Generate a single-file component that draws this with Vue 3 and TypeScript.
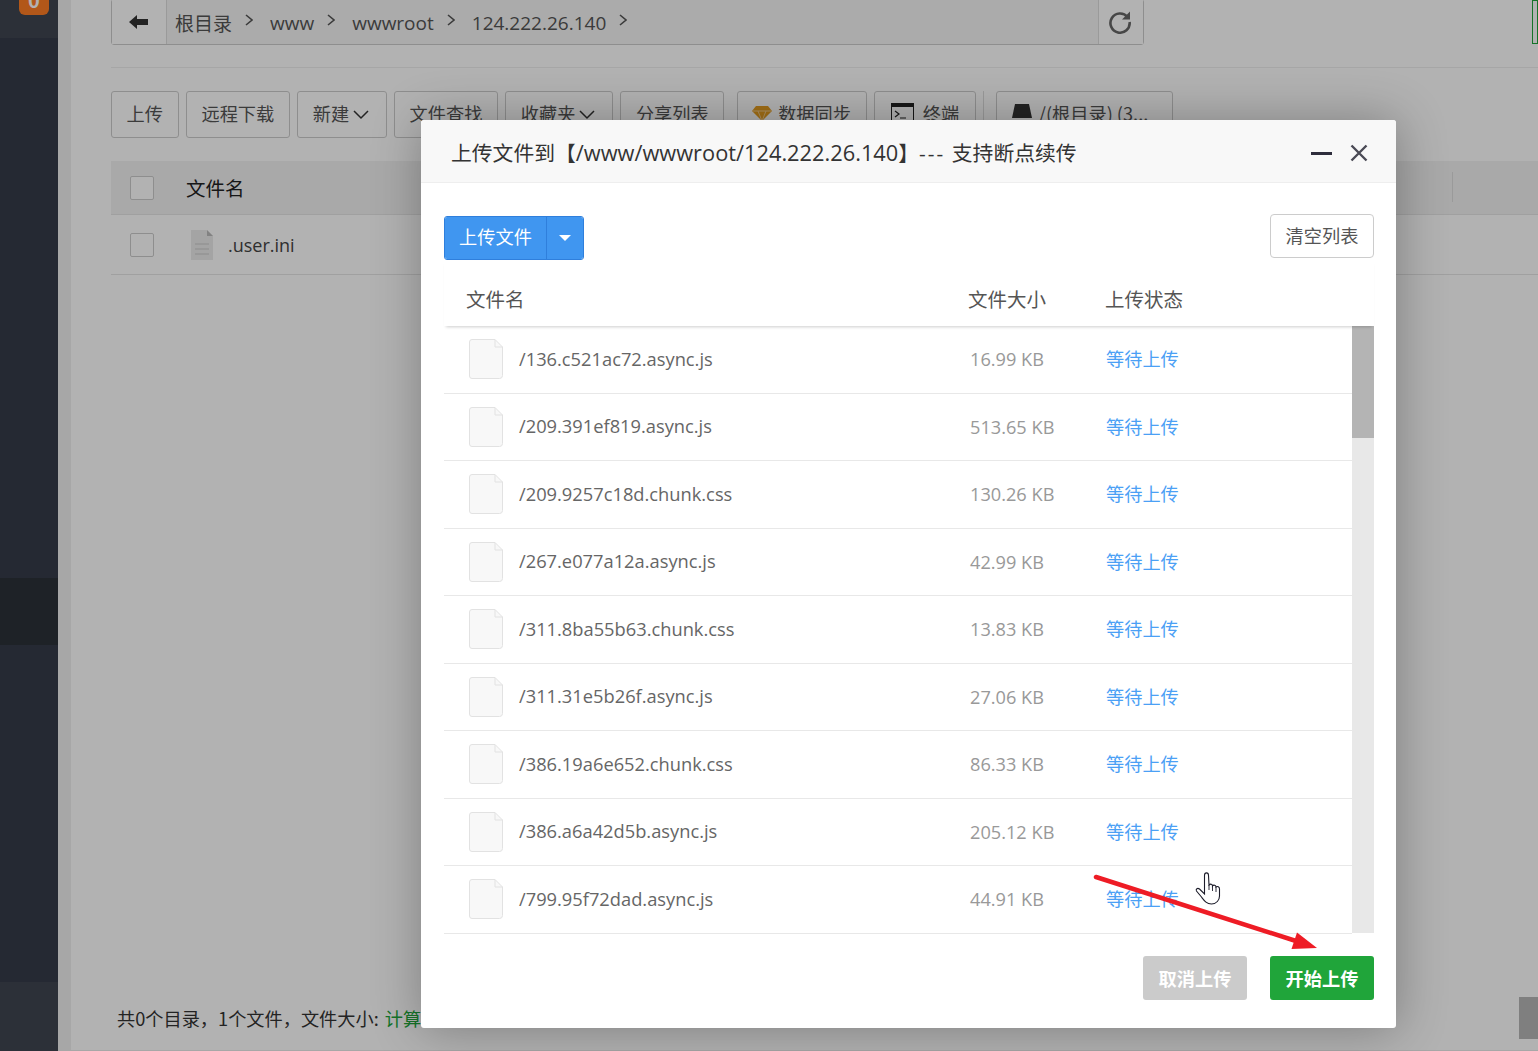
<script setup lang="ts">
interface UploadFile {
  name: string
  size: string
}

const crumbs = ['根目录', 'www', 'wwwroot', '124.222.26.140']

const files: UploadFile[] = [
  { name: '/136.c521ac72.async.js', size: '16.99 KB' },
  { name: '/209.391ef819.async.js', size: '513.65 KB' },
  { name: '/209.9257c18d.chunk.css', size: '130.26 KB' },
  { name: '/267.e077a12a.async.js', size: '42.99 KB' },
  { name: '/311.8ba55b63.chunk.css', size: '13.83 KB' },
  { name: '/311.31e5b26f.async.js', size: '27.06 KB' },
  { name: '/386.19a6e652.chunk.css', size: '86.33 KB' },
  { name: '/386.a6a42d5b.async.js', size: '205.12 KB' },
  { name: '/799.95f72dad.async.js', size: '44.91 KB' }
]
</script>

<template>
  <div class="page">
    <aside class="sidebar">
      <div class="side-top"><span class="side-badge">0</span></div>
      <div class="side-active"></div>
      <div class="side-bottom"></div>
    </aside>

    <main class="content">
      <div class="panel">
        <div class="crumb-bar">
          <button class="crumb-back">
            <svg width="20" height="16" viewBox="0 0 20 16"><path d="M0 8 8 1v4h11v6H8v4z" fill="#333" /></svg>
          </button>
          <div class="crumb-list">
            <template v-for="c in crumbs" :key="c">
              <span class="crumb">{{ c }}</span>
              <svg class="crumb-sep" width="8" height="12" viewBox="0 0 8 12"><path d="M1 1l6 5-6 5" fill="none" stroke="#555" stroke-width="1.6" /></svg>
            </template>
          </div>
          <button class="crumb-refresh">
            <svg width="24" height="24" viewBox="0 0 24 24"><path d="M19.5 7A9.6 9.6 0 1 0 21.6 12" fill="none" stroke="#666" stroke-width="2.6" /><path d="M22 1.5v8h-8z" fill="#666" /></svg>
          </button>
        </div>
        <div class="rule"></div>

        <div class="toolbar">
          <button class="tool">上传</button>
          <button class="tool">远程下载</button>
          <button class="tool">新建<svg class="chev" width="16" height="10" viewBox="0 0 16 10"><path d="M1 1l7 7 7-7" fill="none" stroke="#333" stroke-width="1.5" /></svg></button>
          <button class="tool">文件查找</button>
          <button class="tool">收藏夹<svg class="chev" width="16" height="10" viewBox="0 0 16 10"><path d="M1 1l7 7 7-7" fill="none" stroke="#333" stroke-width="1.5" /></svg></button>
          <button class="tool">分享列表</button>
          <button class="tool tool-sync">
            <svg class="tool-icon" width="20" height="16" viewBox="0 0 20 16"><path d="M4 1h12l4 5-10 10L0 6z" fill="#e8a020" /><path d="M0 6h20M6 6l4 10 4-10" fill="none" stroke="#f8d090" stroke-width="1" /></svg>数据同步
          </button>
          <button class="tool tool-term">
            <svg class="term-icon" width="23" height="20" viewBox="0 0 23 20"><rect x=".5" y=".5" width="22" height="19" fill="none" stroke="#222" /><rect width="23" height="4" fill="#222" /><path d="M4 8l4 3-4 3M9 15h6" fill="none" stroke="#222" stroke-width="1.2" /></svg>终端
          </button>
          <span class="tool-divider"></span>
          <button class="tool tool-disk">
            <svg class="disk-icon" width="20" height="18" viewBox="0 0 20 18"><path d="M3 0h14l3 14H0z" fill="#333" /><path d="M0 16h20v2H0z" fill="#bbb" /></svg>/(根目录) (3...
          </button>
        </div>

        <div class="bg-head">
          <span class="bg-check"></span>
          <span class="bg-head-name">文件名</span>
          <span class="bg-head-line"></span>
        </div>
        <div class="bg-row">
          <span class="bg-check"></span>
          <svg class="bg-file" width="22" height="30" viewBox="0 0 22 30">
            <path d="M0 0h16l6 6v24H0z" fill="#ebebeb" /><path d="M16 0l6 6h-6z" fill="#bbb" />
            <path d="M4 14h14M4 19h14M4 24h14" stroke="#c9c9c9" stroke-width="1.2" />
          </svg>
          <span class="bg-row-name">.user.ini</span>
        </div>

        <div class="bg-foot">共0个目录，1个文件，文件大小: <span class="bg-calc">计算</span></div>
      </div>
      <span class="corner-mark"></span>
      <span class="scroll-top"></span>
    </main>

    <!-- dimmed layer and dialog -->
    <div class="shade"></div>
    <section class="dialog">
      <header class="dialog-head">
        <h2 class="dialog-title">上传文件到【<span class="title-path">/www/wwwroot/124.222.26.140</span>】<span class="title-dash">---</span> 支持断点续传</h2>
        <span class="dialog-min"></span>
        <svg class="dialog-close" width="18" height="18" viewBox="0 0 18 18"><path d="M1.5 1.5l15 15M16.5 1.5l-15 15" stroke="#4a4a55" stroke-width="2.4" /></svg>
      </header>

      <div class="dialog-body">
        <div class="actions">
          <div class="split">
            <button class="split-main">上传文件</button>
            <button class="split-caret"><span class="caret"></span></button>
          </div>
          <button class="clear">清空列表</button>
        </div>

        <div class="list-head">
          <span class="col-name">文件名</span>
          <span class="col-size">文件大小</span>
          <span class="col-state">上传状态</span>
        </div>

        <div class="list-wrap">
          <div class="list">
            <div v-for="f in files" :key="f.name" class="row">
              <svg class="file-icon" width="34" height="40" viewBox="0 0 34 40">
                <path d="M3 .5h23L33.500 8v28.500a3 3 0 0 1-3 3H3a2.500 2.500 0 0 1-2.500-2.500V3A2.500 2.500 0 0 1 3 .5z" fill="#f8f8f8" stroke="#e2e2e2" />
                <path d="M26 .5V8h7.500" fill="none" stroke="#e2e2e2" />
              </svg>
              <span class="row-name">{{ f.name }}</span>
              <span class="row-size">{{ f.size }}</span>
              <span class="row-state">等待上传</span>
            </div>
          </div>
          <div class="scroll"><div class="scroll-thumb"></div></div>
        </div>

        <div class="dialog-foot">
          <button class="foot-btn cancel">取消上传</button>
          <button class="foot-btn start">开始上传</button>
        </div>
      </div>
    </section>

    <!-- annotation drawn over the screenshot -->
    <svg class="annotation" width="1538" height="1051" viewBox="0 0 1538 1051">
      <path d="M1096 877 1296 941" fill="none" stroke="#ee1c25" stroke-width="4.500" stroke-linecap="round" />
      <path d="M1297 932.500 1317 948 1291.500 949z" fill="#ee1c25" />
      <path d="M1204.500 875.500c0-3.500 4-3.500 4 0l.5 9.500c1.500-1.500 3.500-1 3.500 1 1-1.500 3.500-1 3.500 1 1.500-1 3.500-.5 3.500 2v7c0 4-3 8-8 8-5 0-7-3-10-7l-5-6c-1-2 1-3.500 3-2l5 5z" fill="#fff" stroke="#1c1c2a" stroke-width="1.100" />
      <path d="M1209 885v5M1212.500 886v5M1216 887v5" stroke="#1c1c2a" stroke-width=".9" />
    </svg>
  </div>
</template>

<style>
body { background: #fff; }
</style>

<style scoped>
.page {
  position: relative;
  display: flex;
  width: 1538px;
  height: 1051px;
  overflow: hidden;
  background: #fff;
  font-family: "Noto Sans CJK SC", "Open Sans", sans-serif;
  color: #333;
}
button { font-family: inherit; }

.sidebar {
  width: 58px;
  flex: none;
  display: flex;
  flex-direction: column;
  background: #363c49;
}
.side-top { height: 38px; background: #3f4551; position: relative; }
.side-badge {
  position: absolute;
  top: -12px; left: 19px;
  width: 30px; height: 27px;
  border-radius: 6px;
  background: #ff7d25;
  color: #fff;
  font-size: 20px;
  font-weight: 700;
  text-align: center;
  line-height: 24px;
}
.side-active { height: 67px; margin-top: 540px; background: #2c3138; }
.side-bottom { flex: 1; margin-top: 337px; background: #3f4551; }

.content {
  flex: 1;
  position: relative;
  padding-left: 13px;
  background: #f0f0f0;
}
.panel {
  height: 100%;
  background: #fff;
  padding: 0 0 0 40px;
  position: relative;
}

.crumb-bar {
  display: flex;
  width: 1033px;
  height: 46px;
  margin-top: -1px;
  border: 1px solid #ccc;
  border-radius: 3px;
  box-sizing: border-box;
  background: #f5f5f5;
}
.crumb-back {
  width: 55px;
  flex: none;
  border: none;
  border-right: 1px solid #ddd;
  background: #fff;
  display: flex;
  align-items: center;
  justify-content: center;
  padding: 0;
}
.crumb-list { flex: 1; display: flex; align-items: center; padding: 2px 0 0 8px; }
.crumb { font-size: 19px; color: #555; font-family: "Open Sans", "Noto Sans CJK SC", sans-serif; }
.crumb-sep { margin: -6px 17px 0 13px; }
.crumb-refresh {
  width: 45px;
  flex: none;
  border: none;
  border-left: 1px solid #ddd;
  background: #fff;
  padding: 0 2px 0 0;
  display: flex;
  align-items: center;
  justify-content: center;
}
.rule { width: 1427px; height: 1px; margin-top: 22px; background: #eee; }

.toolbar { display: flex; align-items: center; gap: 7.300px; margin-top: 23px; height: 47px; }
.tool {
  display: flex;
  align-items: center;
  height: 47px;
  padding: 0 14.600px 3px;
  border: 1px solid #ccc;
  border-radius: 3px;
  background: #fff;
  color: #555;
  font-size: 18.200px;
  white-space: nowrap;
}
.chev { margin: 3px 2px 0 4px; }
.tool-sync { margin-left: 5px; }
.tool-icon { margin-right: 6px; }
.tool-term { padding: 0 16px 3px; }
.term-icon { margin-right: 9px; }
.tool-divider { width: 1px; height: 47px; margin: 0 5px 0 -1px; background: #ddd; }
.tool-disk { width: 177px; overflow: hidden; padding: 0 15px 3px; }
.disk-icon { margin-right: 7px; flex: none; }

.bg-head {
  display: flex;
  align-items: center;
  width: 1427px;
  height: 53px;
  margin-top: 23px;
  background: #f2f2f2;
  position: relative;
}
.bg-check {
  width: 22px; height: 22px;
  margin-left: 19px;
  border: 1px solid #ccc;
  border-radius: 2px;
  background: #fff;
  flex: none;
}
.bg-head-name { margin-left: 32px; font-size: 19.500px; color: #222; }
.bg-head-line { position: absolute; left: 1341px; top: 11px; width: 1px; height: 30px; background: #ddd; }
.bg-row {
  display: flex;
  align-items: center;
  width: 1427px;
  height: 61px;
  border-top: 1px solid #e6e6e6;
  border-bottom: 1px solid #e6e6e6;
  box-sizing: border-box;
}
.bg-file { margin-left: 37px; }
.bg-row-name { margin-left: 15px; font-size: 18px; color: #444; font-family: "Open Sans", sans-serif; }
.bg-foot {
  position: absolute;
  left: 46px; top: 1006px;
  font-size: 18.200px;
  color: #333;
  white-space: nowrap;
}
.bg-calc { margin-left: 2px; color: #20a53a; }
.corner-mark {
  position: absolute;
  right: 0; top: 0;
  width: 6px; height: 44px;
  border: 1px solid #20a53a;
  box-sizing: border-box;
}
.scroll-top {
  position: absolute;
  right: 0; top: 997px;
  width: 19px; height: 42px;
  background: #b7b7b7;
}

.shade { position: absolute; inset: 0; background: rgba(0, 0, 0, .3); }

.dialog {
  position: absolute;
  left: 421px; top: 120px;
  width: 975px; height: 908px;
  border-radius: 3px;
  background: #fff;
  box-shadow: 1px 1px 50px rgba(0, 0, 0, .3);
  display: flex;
  flex-direction: column;
}
.dialog-head {
  height: 63px;
  box-sizing: border-box;
  flex: none;
  display: flex;
  align-items: center;
  padding: 1px 28px 0 30px;
  background: #f8f8f8;
  border-bottom: 1px solid #eee;
  border-radius: 3px 3px 0 0;
}
.dialog-title {
  flex: 1;
  margin: 0;
  font-size: 20.800px;
  font-weight: 400;
  color: #333;
  white-space: nowrap;
}
.title-path { font-family: "Open Sans", sans-serif; font-size: 21.800px; }
.title-dash { font-family: "Open Sans", sans-serif; letter-spacing: 2px; margin-right: 2px; }
.dialog-min { width: 21px; height: 3px; background: #2e2d3c; margin: 4px 18px 0 0; }
.dialog-close { margin-top: 2px; }

.dialog-body { flex: 1; padding: 0 22px 0 23px; display: flex; flex-direction: column; }
.actions { display: flex; justify-content: space-between; margin-top: 31px; height: 46px; }
.split {
  display: flex;
  height: 44px;
  margin-top: 2px;
  border: 1px solid #2f7fdc;
  border-radius: 3px;
  box-sizing: border-box;
  overflow: hidden;
}
.split-main {
  width: 102px;
  border: none;
  border-right: 1px solid #2f7fdc;
  background: #4096f0;
  color: #fff;
  font-size: 18.200px;
  padding: 0 0 4px;
}
.split-caret {
  flex: 1;
  width: 36px;
  border: none;
  background: #4096f0;
  display: flex;
  align-items: center;
  justify-content: center;
  padding: 0;
}
.caret { border: 6px solid transparent; border-top: 6px solid #fff; border-bottom: none; }
.clear {
  width: 104px;
  height: 44px;
  border: 1px solid #ccc;
  border-radius: 4px;
  background: #fff;
  color: #555;
  font-size: 18.200px;
  padding: 0 0 3px;
}

.list-head {
  position: relative;
  z-index: 1;
  display: flex;
  align-items: center;
  height: 66px;
  padding-top: 10px;
  box-sizing: border-box;
  box-shadow: 0 3px 3px -2px rgba(0, 0, 0, .2);
  font-size: 19.500px;
  color: #555;
}
.col-name { width: 524px; padding-left: 22px; box-sizing: border-box; }
.col-size { width: 137px; }

.list-wrap { display: flex; height: 607px; }
.list { flex: 1; min-width: 0; }
.row {
  display: flex;
  align-items: center;
  height: 67.5px;
  box-sizing: border-box;
  border-bottom: 1px solid #e8e8e8;
  font-size: 18.200px;
}
.file-icon { margin-left: 25px; flex: none; }
.row-name { width: 467px; padding: 0 0 2px 16px; box-sizing: border-box; color: #666; font-family: "Open Sans", sans-serif; font-size: 18.300px; }
.row-size { width: 136px; color: #999; font-family: "Open Sans", sans-serif; font-size: 18.200px; }
.row-state { color: #4ba0f5; padding-bottom: 2px; }
.scroll { width: 22px; flex: none; background: #e8e8e8; }
.scroll-thumb { height: 112px; background: #b4b4b4; }

.dialog-foot { display: flex; justify-content: flex-end; gap: 23px; margin-top: 23px; }
.foot-btn {
  width: 104px;
  height: 44px;
  border: none;
  border-radius: 3px;
  color: #fff;
  font-size: 18.200px;
  font-weight: 700;
  padding: 0;
}
.cancel { background: #cbcbcb; }
.start { background: #20a53a; }

.annotation { position: absolute; left: 0; top: 0; pointer-events: none; }
</style>
